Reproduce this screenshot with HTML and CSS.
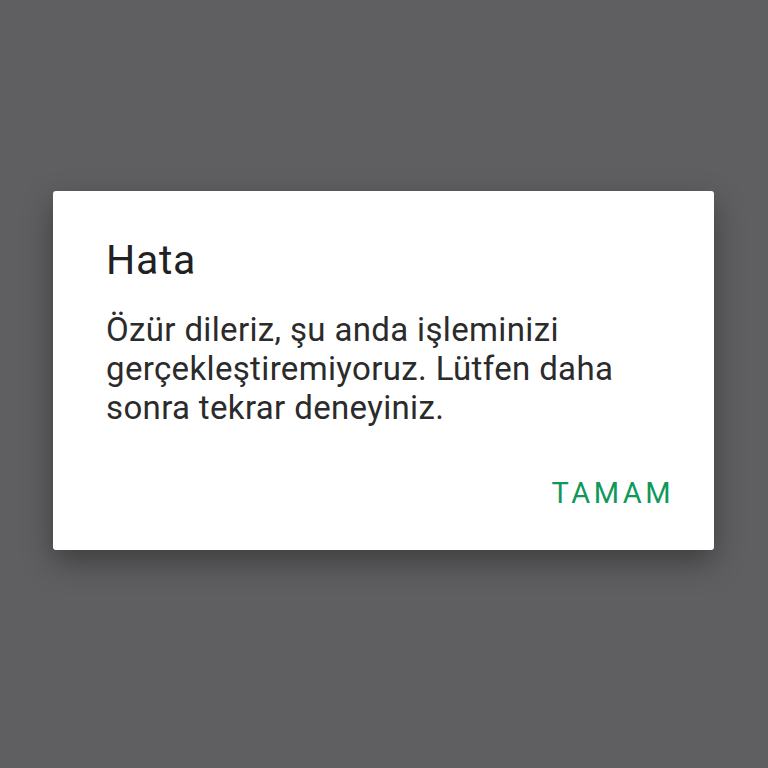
FILE: index.html
```html
<!DOCTYPE html>
<html lang="tr">
<head>
<meta charset="utf-8">
<link rel="stylesheet" href="styles.css">
</head>
<body>
<div class="screen">
  <div class="dialog">
    <h1 class="title">Hata</h1>
    <p class="message">Özür dileriz, şu anda işleminizi gerçekleştiremiyoruz. Lütfen daha sonra tekrar deneyiniz.</p>
    <div class="actions">
      <button class="btn">TAMAM</button>
    </div>
  </div>
</div>
</body>
</html>
```
FILE: styles.css
```css
html, body {
  margin: 0;
  padding: 0;
  width: 768px;
  height: 768px;
  background: #5f5f61;
}
.screen {
  padding: 191px 54px 0 53px;
}
.dialog {
  background: #ffffff;
  border-radius: 3px;
  height: 359px;
  box-sizing: border-box;
  padding: 0 40px 0 53px;
  box-shadow: 0 12px 30px rgba(0,0,0,0.35);
  font-family: Roboto, "Noto Sans", sans-serif;
  display: flex;
  flex-direction: column;
}
.title {
  margin: 45px 0 0 0;
  font-size: 41px;
  font-weight: 400;
  line-height: 48px;
  letter-spacing: 0.7px;
  color: #212121;
}
.message {
  margin: 26px 0 0 0;
  font-size: 33px;
  line-height: 39px;
  letter-spacing: 0.35px;
  color: #2b2b2b;
}
.actions {
  display: flex;
  justify-content: flex-end;
  margin-top: 49px;
}
.btn {
  border: 0;
  background: none;
  padding: 0;
  font-family: Roboto, "Noto Sans", sans-serif;
  font-size: 29px;
  font-weight: 400;
  letter-spacing: 3.5px;
  color: #10985a;
  line-height: 34px;
}
```
